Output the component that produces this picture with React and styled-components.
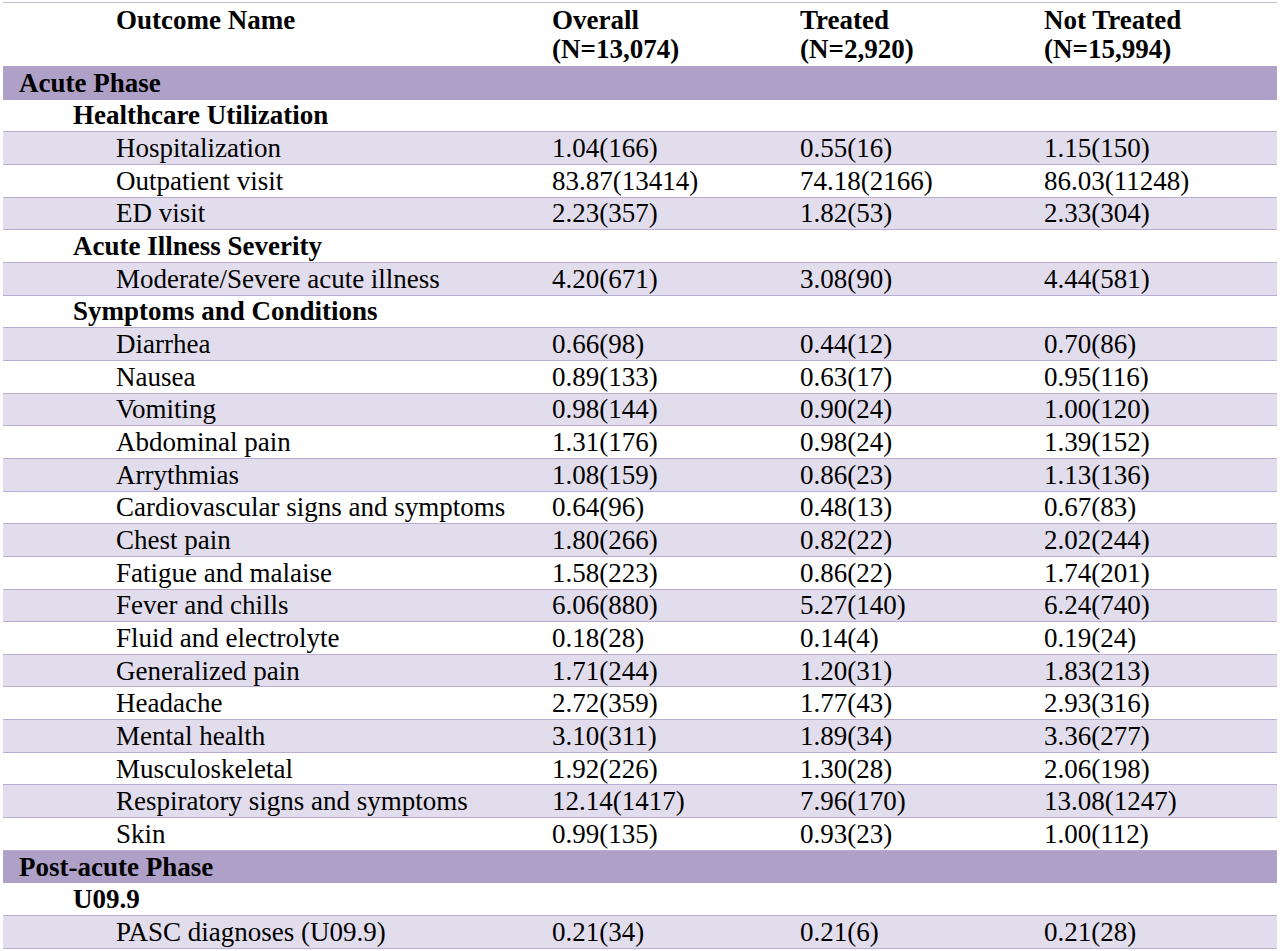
import React from "react";
import styled, { createGlobalStyle } from "styled-components";

const GlobalStyle = createGlobalStyle`
  body {
    margin: 0;
    background: #fff;
    font-family: "Liberation Serif", "Times New Roman", serif;
    color: #000;
  }
`;

const Wrap = styled.div`
  padding: 2px 3px 0 3px;
`;

const Table = styled.table`
  width: 1274px;
  border-collapse: collapse;
  table-layout: fixed;
  font-size: 27px;
`;

const HeadRow = styled.tr`
  height: 64px;
  border-top: 1px solid #c4bad6;
`;

const HeadCell = styled.th`
  text-align: left;
  vertical-align: top;
  font-weight: bold;
  line-height: 29px;
  padding: 3px 0 0 ${(p) => p.$indent || 7}px;
`;

const Row = styled.tr`
  height: 32.67px;
  background: ${(p) =>
    p.$kind === "phase" ? "#afa0c8" : p.$kind === "item" && p.$shade ? "#e2ddec" : "#fff"};
  border-top: 1px solid
    ${(p) => (p.$kind === "phase" ? "#afa0c8" : "#b9aed1")};
  border-bottom: 1px solid
    ${(p) => (p.$kind === "phase" ? "#afa0c8" : "#b9aed1")};
`;

const Cell = styled.td`
  padding: 0 0 0 ${(p) => p.$indent || 7}px;
  white-space: nowrap;
  font-weight: ${(p) => (p.$bold ? "bold" : "normal")};
  line-height: 28px;
`;

const data = [
  { kind: "phase", label: "Acute Phase" },
  { kind: "group", label: "Healthcare Utilization" },
  { kind: "item", label: "Hospitalization", v: ["1.04(166)", "0.55(16)", "1.15(150)"] },
  { kind: "item", label: "Outpatient visit", v: ["83.87(13414)", "74.18(2166)", "86.03(11248)"] },
  { kind: "item", label: "ED visit", v: ["2.23(357)", "1.82(53)", "2.33(304)"] },
  { kind: "group", label: "Acute Illness Severity" },
  { kind: "item", label: "Moderate/Severe acute illness", v: ["4.20(671)", "3.08(90)", "4.44(581)"] },
  { kind: "group", label: "Symptoms and Conditions" },
  { kind: "item", label: "Diarrhea", v: ["0.66(98)", "0.44(12)", "0.70(86)"] },
  { kind: "item", label: "Nausea", v: ["0.89(133)", "0.63(17)", "0.95(116)"] },
  { kind: "item", label: "Vomiting", v: ["0.98(144)", "0.90(24)", "1.00(120)"] },
  { kind: "item", label: "Abdominal pain", v: ["1.31(176)", "0.98(24)", "1.39(152)"] },
  { kind: "item", label: "Arrythmias", v: ["1.08(159)", "0.86(23)", "1.13(136)"] },
  { kind: "item", label: "Cardiovascular signs and symptoms", v: ["0.64(96)", "0.48(13)", "0.67(83)"] },
  { kind: "item", label: "Chest pain", v: ["1.80(266)", "0.82(22)", "2.02(244)"] },
  { kind: "item", label: "Fatigue and malaise", v: ["1.58(223)", "0.86(22)", "1.74(201)"] },
  { kind: "item", label: "Fever and chills", v: ["6.06(880)", "5.27(140)", "6.24(740)"] },
  { kind: "item", label: "Fluid and electrolyte", v: ["0.18(28)", "0.14(4)", "0.19(24)"] },
  { kind: "item", label: "Generalized pain", v: ["1.71(244)", "1.20(31)", "1.83(213)"] },
  { kind: "item", label: "Headache", v: ["2.72(359)", "1.77(43)", "2.93(316)"] },
  { kind: "item", label: "Mental health", v: ["3.10(311)", "1.89(34)", "3.36(277)"] },
  { kind: "item", label: "Musculoskeletal", v: ["1.92(226)", "1.30(28)", "2.06(198)"] },
  { kind: "item", label: "Respiratory signs and symptoms", v: ["12.14(1417)", "7.96(170)", "13.08(1247)"] },
  { kind: "item", label: "Skin", v: ["0.99(135)", "0.93(23)", "1.00(112)"] },
  { kind: "phase", label: "Post-acute Phase" },
  { kind: "group", label: "U09.9" },
  { kind: "item", label: "PASC diagnoses (U09.9)", v: ["0.21(34)", "0.21(6)", "0.21(28)"] },
];

const indents = { phase: 16, group: 70, item: 113 };

export default function App() {
  return (
    <Wrap>
      <GlobalStyle />
      <Table>
        <colgroup>
          <col style={{ width: 542 }} />
          <col style={{ width: 248 }} />
          <col style={{ width: 244 }} />
          <col style={{ width: 240 }} />
        </colgroup>
        <thead>
          <HeadRow>
            <HeadCell $indent={113}>Outcome Name</HeadCell>
            <HeadCell>
              Overall
              <br />
              (N=13,074)
            </HeadCell>
            <HeadCell>
              Treated
              <br />
              (N=2,920)
            </HeadCell>
            <HeadCell>
              Not Treated
              <br />
              (N=15,994)
            </HeadCell>
          </HeadRow>
        </thead>
        <tbody>
          {data.map((r, i) => (
            <Row key={i} $kind={r.kind} $shade={i % 2 === 0}>
              <Cell $indent={indents[r.kind]} $bold={r.kind !== "item"}>
                {r.label}
              </Cell>
              <Cell>{r.v ? r.v[0] : ""}</Cell>
              <Cell>{r.v ? r.v[1] : ""}</Cell>
              <Cell>{r.v ? r.v[2] : ""}</Cell>
            </Row>
          ))}
        </tbody>
      </Table>
    </Wrap>
  );
}
